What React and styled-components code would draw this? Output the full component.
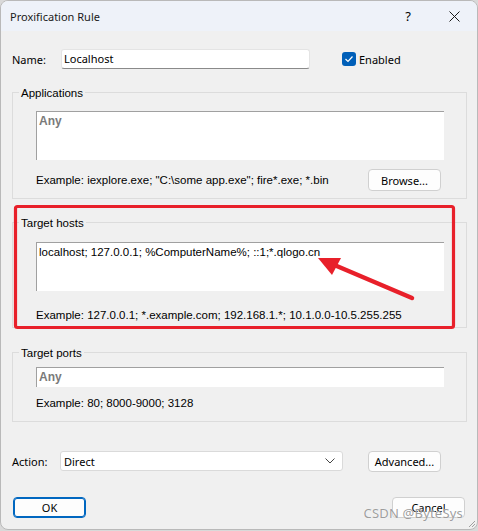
import React from "react";
import styled, { createGlobalStyle } from "styled-components";

const GlobalStyle = createGlobalStyle`
  html, body {
    margin: 0;
    padding: 0;
    background: #d9d9d9;
  }
  * {
    box-sizing: border-box;
  }
`;

const ui = `"Noto Sans", "Open Sans", sans-serif`;
const classic = `"Liberation Sans", Arial, sans-serif`;

const Window = styled.div`
  position: relative;
  width: 478px;
  height: 530px;
  background: #f0f0f0;
  border: 1px solid #b9b9b9;
  border-radius: 8px;
  overflow: hidden;
  font-family: ${ui};
  font-size: 11px;
  color: #000;
`;

const TitleBar = styled.div`
  height: 30px;
  background: #eef2f9;
  display: flex;
  align-items: center;
  padding-left: 9px;
`;

const Title = styled.div`
  flex: 1;
  font-size: 11px;
  color: #1a1a1a;
`;

const HelpButton = styled.div`
  width: 46px;
  text-align: center;
  font-size: 13px;
`;

const CloseButton = styled.div`
  width: 46px;
  height: 30px;
  display: flex;
  align-items: center;
  justify-content: center;
`;

const Body = styled.div`
  padding: 0 10px 0 11px;
`;

const Row = styled.div`
  display: flex;
  align-items: center;
  margin-top: ${(p) => p.$mt || 0}px;
  height: ${(p) => p.$h || 20}px;
`;

const Label = styled.div`
  width: ${(p) => p.$w}px;
`;

const TextInput = styled.div`
  width: ${(p) => p.$w}px;
  height: 20px;
  background: #fff;
  border: 1px solid #e4e4e4;
  border-bottom-color: #8a8a8a;
  border-radius: 3px;
  padding-left: 2px;
  line-height: 18px;
`;

const CheckBox = styled.span`
  width: 14px;
  height: 14px;
  border-radius: 3px;
  background: #005fb8;
  display: inline-flex;
  align-items: center;
  justify-content: center;
  margin: 0 3px 0 32px;
`;

const Group = styled.div`
  border: 1px solid #dcdcdc;
  margin-top: ${(p) => p.$mt}px;
  padding: 0 22px ${(p) => p.$pb}px 23px;
`;

const Caption = styled.div`
  width: fit-content;
  margin: -7px 0 0 -17px;
  padding: 0 2px;
  background: #f0f0f0;
  line-height: 14px;
  font-family: ${classic};
  font-size: 11.5px;
`;

const Field = styled.div`
  height: ${(p) => p.$h}px;
  margin-top: ${(p) => p.$mt}px;
  background: #fff;
  border-top: 1px solid #a0a0a0;
  border-left: 1px solid #a0a0a0;
  padding: 2px 0 0 2px;
  font-family: ${classic};
  font-size: 11.5px;
  line-height: 14px;
`;

const Placeholder = styled.span`
  color: #7a7a7a;
  font-weight: bold;
  font-size: 12px;
`;

const HintRow = styled.div`
  display: flex;
  align-items: center;
  justify-content: space-between;
  height: 22px;
  margin-top: ${(p) => p.$mt}px;
`;

const Hint = styled.div`
  font-family: ${classic};
  font-size: 11.5px;
  line-height: 14px;
  margin-top: ${(p) => p.$mt || 0}px;
`;

const Button = styled.button`
  width: 73px;
  height: ${(p) => p.$h || 21}px;
  background: #fdfdfd;
  border: 1px solid ${(p) => (p.$primary ? "#0067c0" : "#d0d0d0")};
  box-shadow: ${(p) => (p.$primary ? "inset 0 0 0 1px #0067c0" : "none")};
  border-radius: 4px;
  font-family: ${ui};
  font-size: 11px;
  color: #000;
  padding: 0;
  margin-right: ${(p) => p.$mr || 0}px;
  margin-left: ${(p) => p.$ml || 0}px;
`;

const Select = styled.div`
  width: 283px;
  height: 20px;
  background: #fff;
  border: 1px solid #dadada;
  border-radius: 3px;
  display: flex;
  align-items: center;
  justify-content: space-between;
  padding: 0 7px 0 3px;
`;

const Spacer = styled.div`
  flex: 1;
`;

const Overlay = styled.svg`
  position: absolute;
  left: -1px;
  top: -1px;
  pointer-events: none;
`;

const Watermark = styled.div`
  position: absolute;
  right: 14px;
  bottom: 7px;
  font-family: ${ui};
  font-size: 13px;
  color: rgba(140, 140, 140, 0.85);
  text-shadow: 0 0 1px #fff;
  letter-spacing: 0.2px;
`;

const Grip = styled.svg`
  position: absolute;
  right: 1px;
  bottom: 1px;
`;

export default function App() {
  return (
    <>
      <GlobalStyle />
      <Window>
        <TitleBar>
          <Title>Proxification Rule</Title>
          <HelpButton>?</HelpButton>
          <CloseButton>
            <svg width="11" height="11" viewBox="0 0 11 11">
              <path d="M0.5 0.5 L10.5 10.5 M10.5 0.5 L0.5 10.5" stroke="#1a1a1a" strokeWidth="1" />
            </svg>
          </CloseButton>
        </TitleBar>
        <Body>
          <Row $mt={18}>
            <Label $w={49}>Name:</Label>
            <TextInput $w={249}>Localhost</TextInput>
            <CheckBox>
              <svg width="10" height="8" viewBox="0 0 10 8">
                <path d="M1.5 4 L4 6.5 L8.5 1.5" stroke="#fff" strokeWidth="1.2" fill="none" />
              </svg>
            </CheckBox>
            <span>Enabled</span>
          </Row>

          <Group $mt={23} $pb={7}>
            <Caption>Applications</Caption>
            <Field $h={49} $mt={11}>
              <Placeholder>Any</Placeholder>
            </Field>
            <HintRow $mt={9}>
              <Hint>Example: iexplore.exe; "C:\some app.exe"; fire*.exe; *.bin</Hint>
              <Button $h={22} $mr={3}>Browse...</Button>
            </HintRow>
          </Group>

          <Group $mt={23} $pb={5}>
            <Caption>Target hosts</Caption>
            <Field $h={49} $mt={12}>
              localhost; 127.0.0.1; %ComputerName%; ::1;*.qlogo.cn
            </Field>
            <Hint $mt={17}>Example: 127.0.0.1; *.example.com; 192.168.1.*; 10.1.0.0-10.5.255.255</Hint>
          </Group>

          <Group $mt={24} $pb={11}>
            <Caption>Target ports</Caption>
            <Field $h={20} $mt={7}>
              <Placeholder>Any</Placeholder>
            </Field>
            <Hint $mt={9}>Example: 80; 8000-9000; 3128</Hint>
          </Group>

          <Row $mt={29}>
            <Label $w={48}>Action:</Label>
            <Select>
              <span>Direct</span>
              <svg width="10" height="6" viewBox="0 0 10 6">
                <path d="M0.5 0.5 L5 5 L9.5 0.5" stroke="#444" strokeWidth="1" fill="none" />
              </svg>
            </Select>
            <Spacer />
            <Button $mr={26}>Advanced...</Button>
          </Row>

          <Row $mt={26} $h={21}>
            <Button $primary $ml={1}>OK</Button>
            <Spacer />
            <Button $mr={2}>Cancel</Button>
          </Row>
        </Body>

        <Overlay width="478" height="531" viewBox="0 0 478 531">
          <rect x="15.5" y="206.5" width="438" height="121" rx="2" fill="none" stroke="#e8202a" strokeWidth="3.2" />
          <line x1="412" y1="298" x2="332" y2="264" stroke="#e8202a" strokeWidth="4.5" strokeLinecap="round" />
          <polygon points="318,258 341,258 332,275" fill="#e8202a" />
        </Overlay>
        <Watermark>CSDN @ByteSys</Watermark>
        <Grip width="10" height="10" viewBox="0 0 10 10">
          <path d="M9 3 L3 9 M9 6 L6 9" stroke="#a0a0a0" strokeWidth="1" />
        </Grip>
      </Window>
    </>
  );
}
